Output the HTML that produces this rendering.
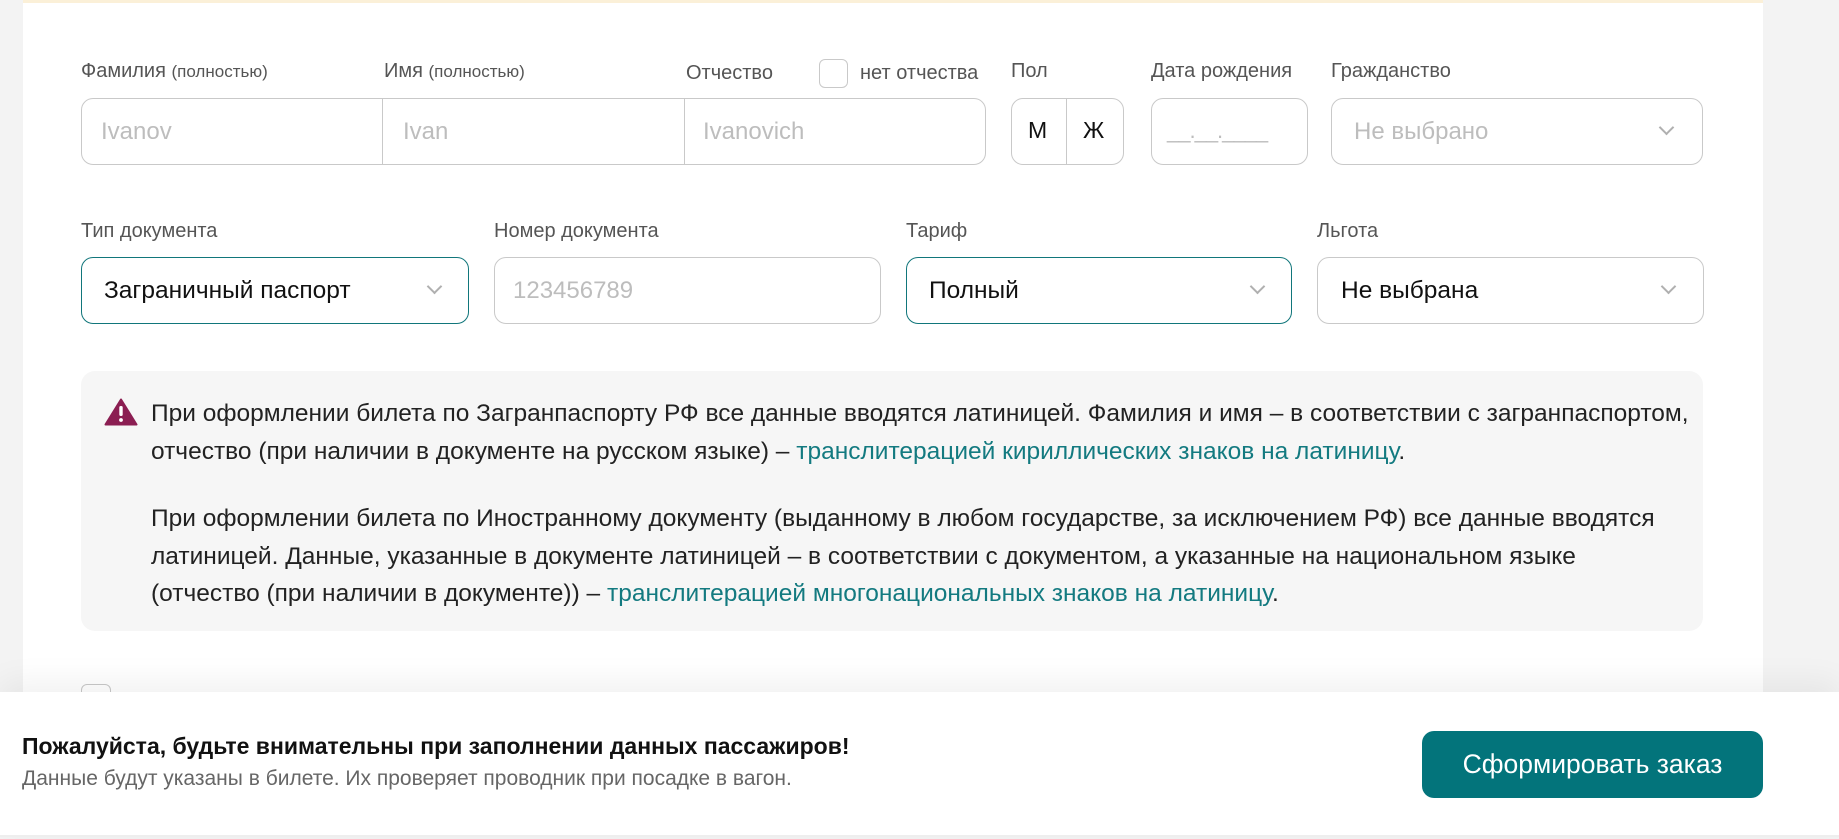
<!DOCTYPE html>
<html><head><meta charset="utf-8"><style>
*{box-sizing:border-box;margin:0;padding:0}
body{width:1839px;height:839px;overflow:hidden;background:#f3f3f3;font-family:"Liberation Sans","Noto Sans CJK SC",sans-serif;position:relative}
.card{position:absolute;left:23px;top:0;width:1740px;height:700px;background:#fff;border-top:3px solid #fbf0d8}
.a{position:absolute}
.lbl{position:absolute;font-size:20px;color:#555;white-space:nowrap}
.lbl small{font-size:17px}
.box{position:absolute;border:1px solid #c9c9c9;border-radius:12px;background:#fff}
.ph{position:absolute;font-size:24px;color:#bdbdbd;white-space:nowrap}
.val{position:absolute;font-size:24.5px;color:#111;white-space:nowrap}
.chev{position:absolute;width:11px;height:11px;border-right:2px solid #b0b0b0;border-bottom:2px solid #b0b0b0;transform:rotate(45deg)}
.teal{border-color:#11767b}
.note{position:absolute;left:81px;top:371px;width:1622px;height:260px;background:#f6f6f6;border-radius:14px}
.note p{position:absolute;left:70px;font-size:24.5px;line-height:37.5px;color:#222;width:1545px}
.note a{color:#137a80;text-decoration:none}
.foot{position:absolute;left:0;top:692px;width:1839px;height:145px;background:#fff;box-shadow:0 -10px 30px rgba(0,0,0,0.06)}
</style></head><body>
<div class="card"></div>
<div class="lbl" style="left:81px;top:60px">Фамилия <small>(полностью)</small></div>
<div class="lbl" style="left:384px;top:60px">Имя <small>(полностью)</small></div>
<div class="lbl" style="left:686px;top:62px">Отчество</div>
<div class="a" style="left:819px;top:59px;width:29px;height:29px;border:1px solid #c9c9c9;border-radius:6px"></div>
<div class="lbl" style="left:860px;top:62px">нет отчества</div>
<div class="lbl" style="left:1011px;top:60px">Пол</div>
<div class="lbl" style="left:1151px;top:60px">Дата рождения</div>
<div class="lbl" style="left:1331px;top:60px">Гражданство</div>

<div class="box" style="left:81px;top:98px;width:905px;height:67px"></div>
<div class="a" style="left:382px;top:99px;width:1px;height:65px;background:#c9c9c9"></div>
<div class="a" style="left:684px;top:99px;width:1px;height:65px;background:#c9c9c9"></div>
<div class="ph" style="left:101px;top:118px">Ivanov</div>
<div class="ph" style="left:403px;top:118px">Ivan</div>
<div class="ph" style="left:703px;top:118px">Ivanovich</div>
<div class="box" style="left:1011px;top:98px;width:113px;height:67px"></div>
<div class="a" style="left:1066px;top:99px;width:1px;height:65px;background:#c9c9c9"></div>
<div class="val" style="left:1028px;top:117px;font-size:23px">М</div>
<div class="val" style="left:1083px;top:117px;font-size:23px">Ж</div>
<div class="box" style="left:1151px;top:98px;width:157px;height:67px"></div>
<div class="ph" style="left:1167px;top:118px;letter-spacing:-1px;font-size:22px">__.__.____</div>
<div class="box" style="left:1331px;top:98px;width:372px;height:67px"></div>
<div class="ph" style="left:1354px;top:118px">Не выбрано</div>
<div class="chev" style="left:1661px;top:122px"></div>

<div class="lbl" style="left:81px;top:220px">Тип документа</div>
<div class="lbl" style="left:494px;top:220px">Номер документа</div>
<div class="lbl" style="left:906px;top:220px">Тариф</div>
<div class="lbl" style="left:1317px;top:220px">Льгота</div>
<div class="box teal" style="left:81px;top:257px;width:388px;height:67px"></div>
<div class="val" style="left:104px;top:277px">Заграничный паспорт</div>
<div class="chev" style="left:429px;top:281px"></div>
<div class="box" style="left:494px;top:257px;width:387px;height:67px"></div>
<div class="ph" style="left:513px;top:277px">123456789</div>
<div class="box teal" style="left:906px;top:257px;width:386px;height:67px"></div>
<div class="val" style="left:929px;top:277px">Полный</div>
<div class="chev" style="left:1252px;top:281px"></div>
<div class="box" style="left:1317px;top:257px;width:387px;height:67px"></div>
<div class="val" style="left:1341px;top:277px">Не выбрана</div>
<div class="chev" style="left:1663px;top:281px"></div>

<div class="note">
<svg style="position:absolute;left:23px;top:27px" width="34" height="28" viewBox="0 0 34 28"><path d="M17 1.5 L32.5 26.5 H1.5 Z" fill="#8b1e52" stroke="#8b1e52" stroke-width="2" stroke-linejoin="round"/><rect x="15.3" y="8" width="3.4" height="10" rx="1.5" fill="#fff"/><circle cx="17" cy="22" r="1.9" fill="#fff"/></svg>
<p style="top:24px">При оформлении билета по Загранпаспорту РФ все данные вводятся латиницей. Фамилия и имя – в соответствии с загранпаспортом, отчество (при наличии в документе на русском языке) – <a>транслитерацией кириллических знаков на латиницу</a>.</p>
<p style="top:129px">При оформлении билета по Иностранному документу (выданному в любом государстве, за исключением РФ) все данные вводятся латиницей. Данные, указанные в документе латиницей – в соответствии с документом, а указанные на национальном языке<br>(отчество (при наличии в документе)) – <a>транслитерацией многонациональных знаков на латиницу</a>.</p>
</div>
<div class="a" style="left:81px;top:684px;width:30px;height:30px;border:1px solid #c9c9c9;border-radius:6px"></div>

<div class="foot">
<div class="a" style="left:22px;top:41px;font-size:23px;font-weight:bold;color:#111;white-space:nowrap">Пожалуйста, будьте внимательны при заполнении данных пассажиров!</div>
<div class="a" style="left:22px;top:75px;font-size:21px;color:#666;white-space:nowrap">Данные будут указаны в билете. Их проверяет проводник при посадке в вагон.</div>
<div class="a" style="left:1422px;top:39px;width:341px;height:67px;background:#03747b;border-radius:12px;color:#fff;font-size:26.5px;text-align:center;line-height:67px">Сформировать заказ</div>
<div class="a" style="left:0;top:143px;width:1839px;height:2px;background:#eee"></div>
</div>
</body></html>
